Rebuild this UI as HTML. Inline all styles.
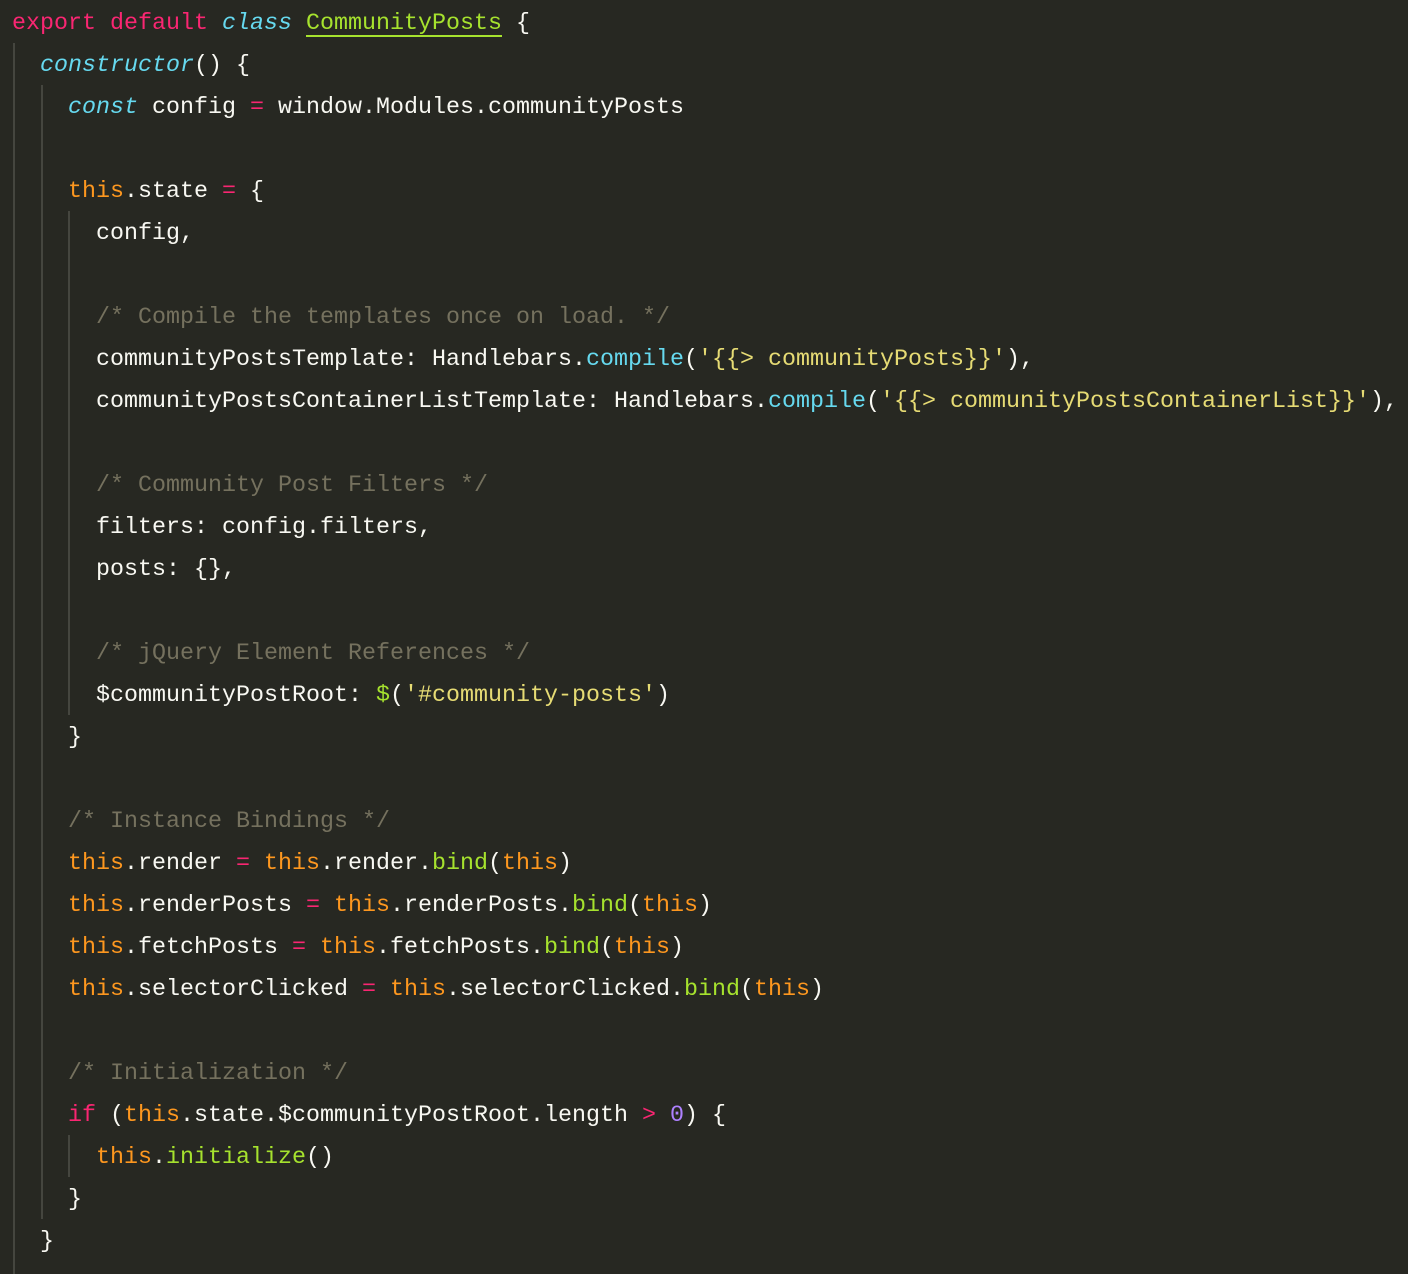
<!DOCTYPE html>
<html><head><meta charset="utf-8"><style>
html,body{margin:0;padding:0;background:#272822;width:1408px;height:1274px;overflow:hidden}
.l{position:absolute;left:12px;height:42px;line-height:42px;white-space:pre;font-family:"Liberation Mono","DejaVu Sans Mono",monospace;font-size:23.33px;color:#f8f8f2}
.k{color:#f92672}.s{color:#66d9ef;font-style:italic}.f{color:#66d9ef}.g{color:#a6e22e}.u{text-decoration:underline;text-underline-offset:6px;text-decoration-thickness:2px}
.t{color:#fd971f}.y{color:#e6db74}.c{color:#75715e}.p{color:#ae81ff}
.gd{position:absolute;width:2px;background:#45463f}
</style></head><body>
<div class="gd" style="left:13px;top:43px;height:1231px"></div>
<div class="gd" style="left:41px;top:85px;height:1134px"></div>
<div class="gd" style="left:68px;top:211px;height:504px"></div>
<div class="gd" style="left:68px;top:1135px;height:42px"></div>
<div class="l" style="top:3px"><span class="k">export</span> <span class="k">default</span> <span class="s">class</span> <span class="g u">CommunityPosts</span> {</div>
<div class="l" style="top:45px">  <span class="s">constructor</span>() {</div>
<div class="l" style="top:87px">    <span class="s">const</span> config <span class="k">=</span> window.Modules.communityPosts</div>
<div class="l" style="top:171px">    <span class="t">this</span>.state <span class="k">=</span> {</div>
<div class="l" style="top:213px">      config,</div>
<div class="l" style="top:297px">      <span class="c">/* Compile the templates once on load. */</span></div>
<div class="l" style="top:339px">      communityPostsTemplate: Handlebars.<span class="f">compile</span>(<span class="y">'{{&gt; communityPosts}}'</span>),</div>
<div class="l" style="top:381px">      communityPostsContainerListTemplate: Handlebars.<span class="f">compile</span>(<span class="y">'{{&gt; communityPostsContainerList}}'</span>),</div>
<div class="l" style="top:465px">      <span class="c">/* Community Post Filters */</span></div>
<div class="l" style="top:507px">      filters: config.filters,</div>
<div class="l" style="top:549px">      posts: {},</div>
<div class="l" style="top:633px">      <span class="c">/* jQuery Element References */</span></div>
<div class="l" style="top:675px">      $communityPostRoot: <span class="g">$</span>(<span class="y">'#community-posts'</span>)</div>
<div class="l" style="top:717px">    }</div>
<div class="l" style="top:801px">    <span class="c">/* Instance Bindings */</span></div>
<div class="l" style="top:843px">    <span class="t">this</span>.render <span class="k">=</span> <span class="t">this</span>.render.<span class="g">bind</span>(<span class="t">this</span>)</div>
<div class="l" style="top:885px">    <span class="t">this</span>.renderPosts <span class="k">=</span> <span class="t">this</span>.renderPosts.<span class="g">bind</span>(<span class="t">this</span>)</div>
<div class="l" style="top:927px">    <span class="t">this</span>.fetchPosts <span class="k">=</span> <span class="t">this</span>.fetchPosts.<span class="g">bind</span>(<span class="t">this</span>)</div>
<div class="l" style="top:969px">    <span class="t">this</span>.selectorClicked <span class="k">=</span> <span class="t">this</span>.selectorClicked.<span class="g">bind</span>(<span class="t">this</span>)</div>
<div class="l" style="top:1053px">    <span class="c">/* Initialization */</span></div>
<div class="l" style="top:1095px">    <span class="k">if</span> (<span class="t">this</span>.state.$communityPostRoot.length <span class="k">&gt;</span> <span class="p">0</span>) {</div>
<div class="l" style="top:1137px">      <span class="t">this</span>.<span class="g">initialize</span>()</div>
<div class="l" style="top:1179px">    }</div>
<div class="l" style="top:1221px">  }</div>
</body></html>
